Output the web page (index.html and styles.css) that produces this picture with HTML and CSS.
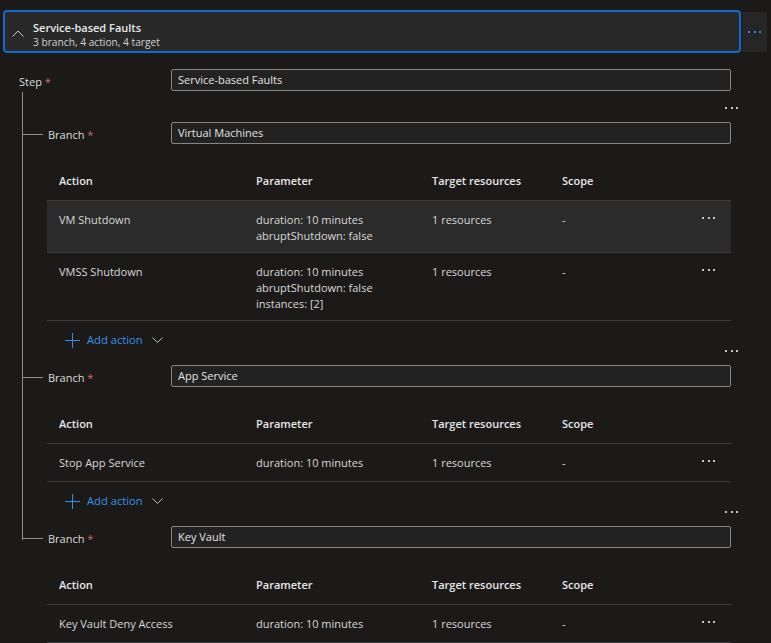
FILE: index.html
```html
<!DOCTYPE html>
<html lang="en">
<head>
<meta charset="utf-8">
<title>Service-based Faults</title>
<link rel="stylesheet" href="styles.css">
</head>
<body>
<div class="page">
  <div class="top">
    <div class="step-card">
      <svg class="chev-up" width="12" height="7" viewBox="0 0 12 7"><path d="M0.5 6.5 L6 1 L11.5 6.5" stroke="#c8c8c8" fill="none"/></svg>
      <div class="titles">
        <div class="title">Service-based Faults</div>
        <div class="sub">3 branch, 4 action, 4 target</div>
      </div>
    </div>
    <div class="card-more"><span class="dots blue"><i></i><i></i><i></i></span></div>
  </div>

  <div class="content">
    <div class="field-row step-row">
      <div class="label">Step <span class="req">*</span></div>
      <div class="input">Service-based Faults</div>
    </div>

    <div class="tree">
      <section class="branch">
        <div class="field-row branch-row">
          <div class="label branch-label">Branch <span class="req">*</span></div>
          <div class="input">Virtual Machines</div>
          <span class="dots branch-more"><i></i><i></i><i></i></span>
        </div>
        <div class="grid">
          <div class="grow head"><div>Action</div><div>Parameter</div><div>Target resources</div><div>Scope</div><div></div></div>
          <div class="grow hover"><div>VM Shutdown</div><div>duration: 10 minutes<br>abruptShutdown: false</div><div>1 resources</div><div>-</div><div class="act"><span class="dots"><i></i><i></i><i></i></span></div></div>
          <div class="grow"><div>VMSS Shutdown</div><div>duration: 10 minutes<br>abruptShutdown: false<br>instances: [2]</div><div>1 resources</div><div>-</div><div class="act"><span class="dots"><i></i><i></i><i></i></span></div></div>
        </div>
        <div class="add-action">
          <svg width="15" height="15" viewBox="0 0 15 15"><path d="M7.5 0 V15 M0 7.5 H15" stroke="#2f8fe3" stroke-width="1" fill="none"/></svg>
          <span>Add action</span>
          <svg width="11" height="6" viewBox="0 0 11 6"><path d="M0.5 0.5 L5.5 5.5 L10.5 0.5" stroke="#bdbdbd" fill="none"/></svg>
        </div>
      </section>

      <section class="branch">
        <div class="field-row branch-row">
          <div class="label branch-label">Branch <span class="req">*</span></div>
          <div class="input">App Service</div>
          <span class="dots branch-more"><i></i><i></i><i></i></span>
        </div>
        <div class="grid">
          <div class="grow head"><div>Action</div><div>Parameter</div><div>Target resources</div><div>Scope</div><div></div></div>
          <div class="grow"><div>Stop App Service</div><div>duration: 10 minutes</div><div>1 resources</div><div>-</div><div class="act"><span class="dots"><i></i><i></i><i></i></span></div></div>
        </div>
        <div class="add-action">
          <svg width="15" height="15" viewBox="0 0 15 15"><path d="M7.5 0 V15 M0 7.5 H15" stroke="#2f8fe3" stroke-width="1" fill="none"/></svg>
          <span>Add action</span>
          <svg width="11" height="6" viewBox="0 0 11 6"><path d="M0.5 0.5 L5.5 5.5 L10.5 0.5" stroke="#bdbdbd" fill="none"/></svg>
        </div>
      </section>

      <section class="branch">
        <div class="field-row branch-row">
          <div class="label branch-label">Branch <span class="req">*</span></div>
          <div class="input">Key Vault</div>
          <span class="dots branch-more"><i></i><i></i><i></i></span>
        </div>
        <div class="grid">
          <div class="grow head"><div>Action</div><div>Parameter</div><div>Target resources</div><div>Scope</div><div></div></div>
          <div class="grow"><div>Key Vault Deny Access</div><div>duration: 10 minutes</div><div>1 resources</div><div>-</div><div class="act"><span class="dots"><i></i><i></i><i></i></span></div></div>
        </div>
      </section>
    </div>
  </div>
</div>
</body>
</html>
```

FILE: styles.css
```css
html, body {
  margin: 0;
  background: #1b1a19;
}
body {
  font-family: "Open Sans", "Noto Sans", sans-serif;
  font-size: 11px;
  line-height: 16px;
  color: #d8d8d8;
  height: 643px;
  overflow: hidden;
}
.page {
  width: 771px;
}

/* top card */
.top {
  display: flex;
  align-items: flex-start;
  padding: 10px 4px 0 3px;
}
.step-card {
  flex: 1;
  height: 43px;
  box-sizing: border-box;
  border: 2px solid #1469d0;
  border-radius: 4px;
  background: #292929;
  display: flex;
  align-items: flex-start;
  padding: 9px 0 0 7px;
  gap: 9px;
}
.chev-up {
  margin-top: 9px;
}
.titles {
  display: flex;
  flex-direction: column;
}
.title {
  font-weight: 600;
  color: #e8e8e8;
  line-height: 14px;
}
.sub {
  font-size: 10.2px;
  color: #d0d0d0;
  line-height: 15px;
}
.card-more {
  width: 25px;
  height: 40px;
  margin-top: 2px;
  margin-left: 1px;
  background: #262626;
  display: flex;
  align-items: center;
  justify-content: center;
}

/* dots */
.dots {
  display: inline-flex;
  gap: 3.5px;
}
.dots i {
  display: block;
  width: 2px;
  height: 2px;
  background: #c8c8c8;
}
.dots.blue i {
  background: #2f86e0;
}

/* content */
.content {
  padding-right: 40px;
}
.field-row {
  display: flex;
  align-items: center;
  height: 22px;
}
.step-row {
  margin-top: 16px;
  padding-left: 19px;
}
.label {
  color: #dcdcdc;
  padding-top: 3px;
}
.req {
  color: #d9636a;
}
.input {
  margin-left: auto;
  flex: 0 0 560px;
  height: 22px;
  box-sizing: border-box;
  border: 1px solid #858585;
  border-radius: 2px;
  background: #222222;
  padding-left: 6px;
  display: flex;
  align-items: center;
  color: #e2e2e2;
}

/* tree */
.tree {
  margin-left: 22px;
  margin-top: 1px;
}
.branch {
  position: relative;
  border-left: 1px solid #8e8e8e;
  padding-top: 8px;
}
.branch:first-child {
  padding-top: 30px;
}
.branch:last-child {
  border-left-color: transparent;
}
.branch:last-child::before {
  content: "";
  position: absolute;
  left: -1px;
  top: 0;
  width: 1px;
  height: 22px;
  background: #8e8e8e;
}
.branch-row {
  position: relative;
}
.branch-label {
  position: relative;
  padding-left: 25px;
}
.branch-label::before {
  content: "";
  position: absolute;
  left: 0;
  top: 55%;
  width: 20px;
  height: 1px;
  background: #8e8e8e;
}
.branch-more {
  position: absolute;
  right: -7px;
  top: -15px;
}

/* grid table */
.grid {
  margin-left: 24px;
  margin-top: 17px;
}
.grow {
  display: grid;
  grid-template-columns: 197px 176px 130px 130px 1fr;
  min-height: 38px;
  box-sizing: border-box;
  border-bottom: 1px solid #3a3a3a;
}
.grow > div {
  padding: 11px 12px 8px;
}
.grow.head {
  height: 40px;
  align-items: center;
  font-weight: 600;
  color: #e6e6e6;
}
.grow.head > div {
  padding-top: 0;
  padding-bottom: 0;
}
.grow.hover {
  background: #2b2b2b;
}
.grow > .act {
  display: flex;
  align-items: flex-start;
  padding: 16px 0 0 22px;
}

/* add action */
.add-action {
  display: flex;
  align-items: center;
  height: 36px;
  box-sizing: border-box;
  padding-top: 2px;
  margin-left: 42px;
  color: #3593e6;
  font-size: 11.2px;
}
.add-action span {
  margin: 0 9px 0 7px;
}
```
